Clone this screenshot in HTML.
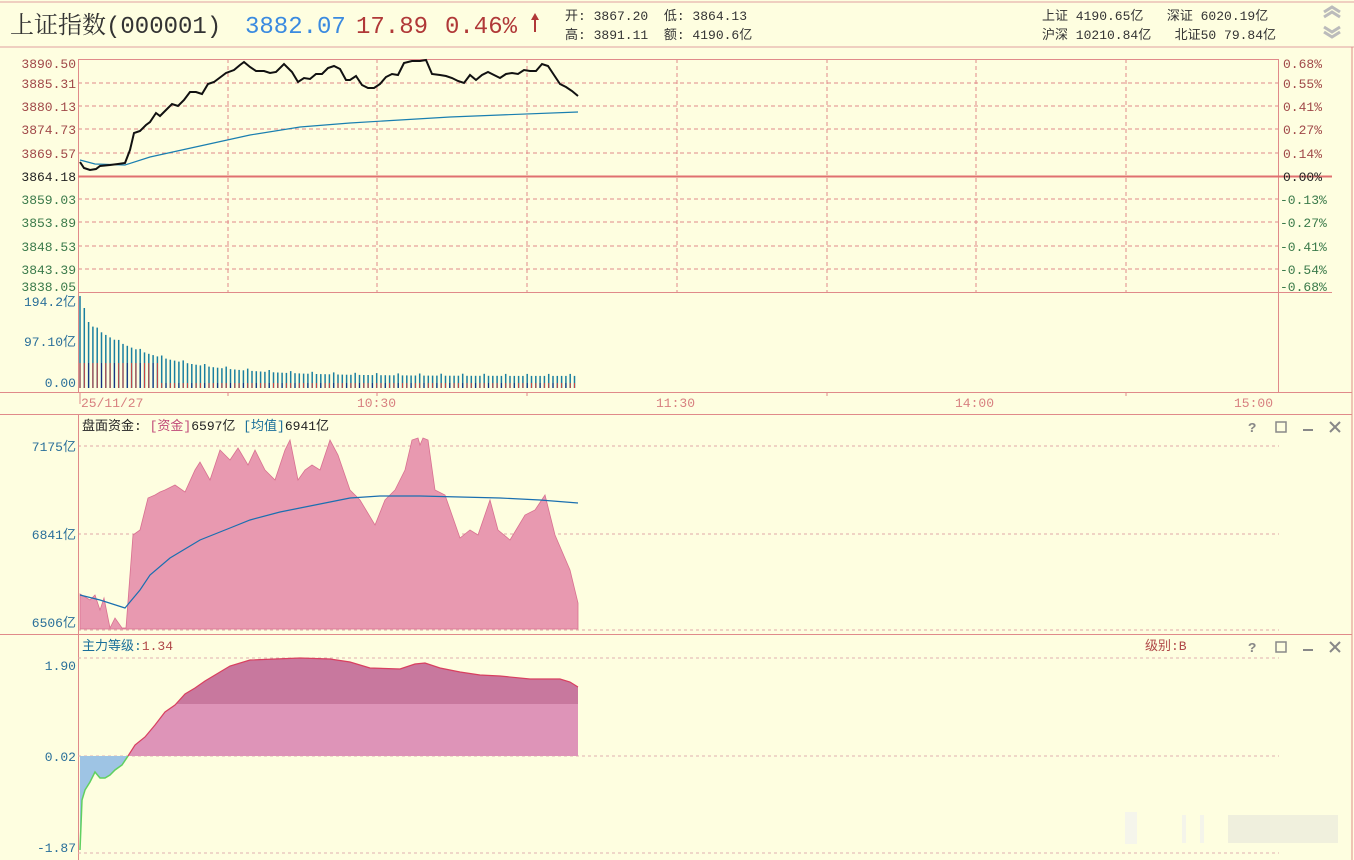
<!DOCTYPE html>
<html><head><meta charset="utf-8"><style>
html,body{margin:0;padding:0;background:#fefee0;}
body{width:1354px;height:860px;overflow:hidden;position:relative;font-family:"Liberation Mono","Noto Sans CJK SC",monospace;}
svg{position:absolute;left:0;top:0}
text{white-space:pre}
</style></head><body>
<svg width="1354" height="860" xmlns="http://www.w3.org/2000/svg" font-family="Liberation Mono, Noto Sans CJK SC, monospace">
<rect width="1354" height="860" fill="#fefee0"/>
<!-- header -->
<line x1="0" y1="2" x2="1354" y2="2" stroke="#e0a0a0"/>
<line x1="0" y1="47" x2="1354" y2="47" stroke="#e0a0a0"/>
<line x1="1352" y1="47" x2="1352" y2="860" stroke="#e08a8a"/>
<text x="10" y="33" font-size="24" fill="#333" font-family="Liberation Mono, Noto Serif CJK SC, serif">上证指数(000001)</text>
<text x="245" y="33" font-size="24" fill="#3a8ae0" font-family="Liberation Mono, monospace">3882.07</text>
<text x="356" y="33" font-size="24" fill="#b03838" font-family="Liberation Mono, monospace">17.89</text>
<text x="445" y="33" font-size="24" fill="#b03838" font-family="Liberation Mono, monospace">0.46%</text>
<path d="M535 13 L531 20 L534 20 L534 32 L536 32 L536 20 L539 20 Z" fill="#b03838"/>
<g font-size="13" fill="#333">
<text x="565" y="20">开: 3867.20  低: 3864.13</text>
<text x="565" y="39">高: 3891.11  额: 4190.6亿</text>
<text x="1042" y="20">上证 4190.65亿   深证 6020.19亿</text>
<text x="1042" y="39">沪深 10210.84亿   北证50 79.84亿</text>
</g>
<path d="M1324 12 L1332 7 L1340 12 M1324 17 L1332 12 L1340 17" stroke="#bbb" stroke-width="3" fill="none"/>
<path d="M1324 27 L1332 32 L1340 27 M1324 32 L1332 37 L1340 32" stroke="#bbb" stroke-width="3" fill="none"/>

<!-- price chart -->
<g stroke="#e08a8a" stroke-dasharray="4,3" stroke-width="1">
<line x1="78" y1="83" x2="1279" y2="83"/><line x1="78" y1="106" x2="1279" y2="106"/>
<line x1="78" y1="129" x2="1279" y2="129"/><line x1="78" y1="153" x2="1279" y2="153"/>
<line x1="78" y1="199" x2="1279" y2="199"/><line x1="78" y1="222" x2="1279" y2="222"/>
<line x1="78" y1="246" x2="1279" y2="246"/><line x1="78" y1="269" x2="1279" y2="269"/>
<line x1="228" y1="59" x2="228" y2="292"/><line x1="377" y1="59" x2="377" y2="292"/>
<line x1="527" y1="59" x2="527" y2="292"/><line x1="677" y1="59" x2="677" y2="292"/>
<line x1="827" y1="59" x2="827" y2="292"/><line x1="976" y1="59" x2="976" y2="292"/>
<line x1="1126" y1="59" x2="1126" y2="292"/>
</g>
<rect x="78.5" y="59.5" width="1200" height="333" fill="none" stroke="#e08a8a"/>
<line x1="78" y1="292.5" x2="1332" y2="292.5" stroke="#e08a8a"/>
<line x1="78" y1="176.5" x2="1332" y2="176.5" stroke="#e07070" stroke-width="2"/>
<g font-size="13" text-anchor="end">
<text x="76" y="68" fill="#a04848">3890.50</text><text x="76" y="88" fill="#a04848">3885.31</text>
<text x="76" y="111" fill="#a04848">3880.13</text><text x="76" y="134" fill="#a04848">3874.73</text>
<text x="76" y="158" fill="#a04848">3869.57</text><text x="76" y="181" fill="#222">3864.18</text>
<text x="76" y="204" fill="#3a7a4a">3859.03</text><text x="76" y="227" fill="#3a7a4a">3853.89</text>
<text x="76" y="251" fill="#3a7a4a">3848.53</text><text x="76" y="274" fill="#3a7a4a">3843.39</text>
<text x="76" y="291" fill="#3a7a4a">3838.05</text>
</g>
<g font-size="13">
<text x="1283" y="68" fill="#a04848">0.68%</text><text x="1283" y="88" fill="#a04848">0.55%</text>
<text x="1283" y="111" fill="#a04848">0.41%</text><text x="1283" y="134" fill="#a04848">0.27%</text>
<text x="1283" y="158" fill="#a04848">0.14%</text><text x="1283" y="181" fill="#222">0.00%</text>
<text x="1280" y="204" fill="#3a7a4a">-0.13%</text><text x="1280" y="227" fill="#3a7a4a">-0.27%</text>
<text x="1280" y="251" fill="#3a7a4a">-0.41%</text><text x="1280" y="274" fill="#3a7a4a">-0.54%</text>
<text x="1280" y="291" fill="#3a7a4a">-0.68%</text>
</g>
<polyline fill="none" stroke="#1a7fb0" stroke-width="1.2" points="80,160 95,164 125,165 150,157 200,146 250,135 300,127 350,123 400,120 450,117 500,115 578,112"/>
<polyline fill="none" stroke="#111" stroke-width="2" points="80,162 84,168 90,170 96,169 100,166 110,165 118,164 125,163 130,150 134,133 140,131 146,125 150,122 156,113 160,116 166,110 172,104 178,106 184,100 190,92 196,92 202,94 208,84 214,82 222,76 226,73 234,70 240,65 244,62 250,67 256,71 264,71 270,73 276,72 284,64 292,72 298,82 304,78 310,79 316,74 322,74 328,68 334,66 340,69 346,80 350,80 356,76 362,85 368,88 374,88 380,84 386,77 392,74 398,75 404,63 412,61 420,61 426,60 432,74 440,75 446,76 452,78 458,81 464,83 470,75 476,80 482,75 488,72 494,75 500,78 506,74 512,73 518,74 524,70 530,71 536,71 542,64 548,66 554,75 560,84 566,87 572,91 578,96"/>

<!-- volume -->
<g id="vol"></g>
<g font-size="13" fill="#2a6f9a" text-anchor="end">
<text x="76" y="306">194.2亿</text><text x="76" y="346">97.10亿</text><text x="76" y="387">0.00</text>
</g>
<line x1="0" y1="392.5" x2="1352" y2="392.5" stroke="#e08a8a"/>
<g stroke="#e08a8a"><line x1="228" y1="392" x2="228" y2="396"/><line x1="377" y1="392" x2="377" y2="396"/><line x1="527" y1="392" x2="527" y2="396"/><line x1="827" y1="392" x2="827" y2="396"/><line x1="1126" y1="392" x2="1126" y2="396"/><line x1="80" y1="392" x2="80" y2="404"/></g>
<g font-size="13" fill="#d88080">
<text x="81" y="407">25/11/27</text><text x="357" y="407">10:30</text><text x="656" y="407">11:30</text><text x="955" y="407">14:00</text><text x="1234" y="407">15:00</text>
</g>
<line x1="0" y1="414.5" x2="1352" y2="414.5" stroke="#e08a8a"/>

<!-- panel 2 -->
<g stroke="#e0a8a8" stroke-dasharray="3,3"><line x1="78" y1="446" x2="1279" y2="446"/><line x1="78" y1="534" x2="1279" y2="534"/><line x1="78" y1="630" x2="1279" y2="630"/></g>
<line x1="78.5" y1="414" x2="78.5" y2="860" stroke="#e08a8a"/>
<text x="82" y="430" font-size="13"><tspan fill="#222">盘面资金: </tspan><tspan fill="#c04878">[资金]</tspan><tspan fill="#222">6597亿 </tspan><tspan fill="#1a6f9a">[均值]</tspan><tspan fill="#222">6941亿</tspan></text>
<g font-size="13" fill="#2a6f9a" text-anchor="end"><text x="76" y="451">7175亿</text><text x="76" y="539">6841亿</text><text x="76" y="627">6506亿</text></g>
<g fill="#888" stroke="#888">
<text x="1248" y="432" font-size="14" font-weight="bold" stroke="none">?</text>
<rect x="1276" y="422" width="10" height="10" fill="none" stroke-width="1.5"/>
<line x1="1303" y1="430" x2="1313" y2="430" stroke-width="2"/>
<path d="M1330 422 L1340 432 M1340 422 L1330 432" stroke-width="2"/>
</g>
<polygon fill="#e899b0" stroke="#d87090" stroke-width="0.8" points="80,629 80,594 90,600 95,595 100,610 104,598 110,628 115,618 122,628 126,628 133,535 140,530 148,498 155,495 160,492 165,490 175,485 185,492 195,470 200,462 210,480 220,450 230,460 238,448 248,465 255,450 265,470 275,480 285,450 290,440 298,480 305,470 312,465 320,470 330,440 338,455 350,490 360,500 375,525 385,500 395,490 405,470 412,440 418,438 420,445 423,438 428,440 435,490 445,495 460,538 470,530 478,535 490,500 498,530 510,540 525,515 535,510 545,495 555,535 570,570 578,603 578,629"/>
<polyline fill="none" stroke="#1a6fb0" stroke-width="1.2" points="80,595 100,600 125,608 140,590 150,575 170,558 200,540 230,528 250,520 280,512 300,508 330,502 350,498 380,496 420,496 460,497 500,498 540,500 578,503"/>
<line x1="0" y1="634.5" x2="1352" y2="634.5" stroke="#e08a8a"/>

<!-- panel 3 -->
<g stroke="#e0b0b0" stroke-dasharray="3,3"><line x1="78" y1="658" x2="1279" y2="658"/><line x1="78" y1="756" x2="1279" y2="756"/><line x1="78" y1="853" x2="1279" y2="853"/></g>
<text x="82" y="650" font-size="13"><tspan fill="#1a6f9a">主力等级:</tspan><tspan fill="#b04848">1.34</tspan></text>
<text x="1145" y="650" font-size="13" fill="#b04848">级别:B</text>
<g fill="#888" stroke="#888">
<text x="1248" y="652" font-size="14" font-weight="bold" stroke="none">?</text>
<rect x="1276" y="642" width="10" height="10" fill="none" stroke-width="1.5"/>
<line x1="1303" y1="650" x2="1313" y2="650" stroke-width="2"/>
<path d="M1330 642 L1340 652 M1340 642 L1330 652" stroke-width="2"/>
</g>
<g font-size="13" fill="#2a6f9a" text-anchor="end"><text x="76" y="670">1.90</text><text x="76" y="761">0.02</text><text x="76" y="852">-1.87</text></g>
<clipPath id="cl"><polygon points="128,756 135,745 145,737 155,725 165,712 175,705 185,694 195,688 205,681 215,675 230,666 250,660 300,658 330,659 350,662 370,668 400,669 415,664 425,663 440,668 460,672 480,675 500,676 530,679 560,679 570,682 578,687 578,756"/></clipPath>
<g clip-path="url(#cl)"><rect x="100" y="640" width="480" height="64" fill="#c8789e"/><rect x="100" y="704" width="480" height="52" fill="#de94b8"/></g>
<polyline fill="none" stroke="#d84060" stroke-width="1.2" points="128,756 135,745 145,737 155,725 165,712 175,705 185,694 195,688 205,681 215,675 230,666 250,660 300,658 330,659 350,662 370,668 400,669 415,664 425,663 440,668 460,672 480,675 500,676 530,679 560,679 570,682 578,687"/>
<polygon fill="#9ec4e4" points="80,756 80,850 82,800 85,790 90,782 95,772 100,778 105,778 110,775 115,770 122,765 128,756"/>
<polyline fill="none" stroke="#60d060" stroke-width="1.5" points="80,850 82,800 85,790 90,782 95,772 100,778 105,778 110,775 115,770 122,765 128,756"/>
<g fill="#f4f4ec" opacity="0.9"><rect x="1125" y="812" width="12" height="32"/><rect x="1182" y="815" width="4" height="28"/><rect x="1200" y="815" width="4" height="28"/><rect x="1228" y="815" width="110" height="28" fill="#eeeedd"/></g>
</svg>
<script>
(function(){var g=document.getElementById('vol'),s='',n=0;
for(var x=80;x<=578;x+=4.3){var h;n++;
if(n==1)h=92;else if(n==2)h=80;else if(n==3)h=66;else h=Math.max(10,50*Math.exp(-(x-92)/70)+12+(n%5==0?2:0));
var top=388-h;s+='<line x1="'+x.toFixed(1)+'" y1="'+top.toFixed(1)+'" x2="'+x.toFixed(1)+'" y2="388" stroke="#1a7fa0" stroke-width="1.5"/>';
s+='<line x1="'+x.toFixed(1)+'" y1="'+(388-Math.min(h,n<20?25:5)).toFixed(1)+'" x2="'+x.toFixed(1)+'" y2="388" stroke="'+(n%3==0?'#1a2a80':'#d04040')+'" stroke-width="1"/>';}
g.innerHTML=s;})();
</script>
</body></html>
